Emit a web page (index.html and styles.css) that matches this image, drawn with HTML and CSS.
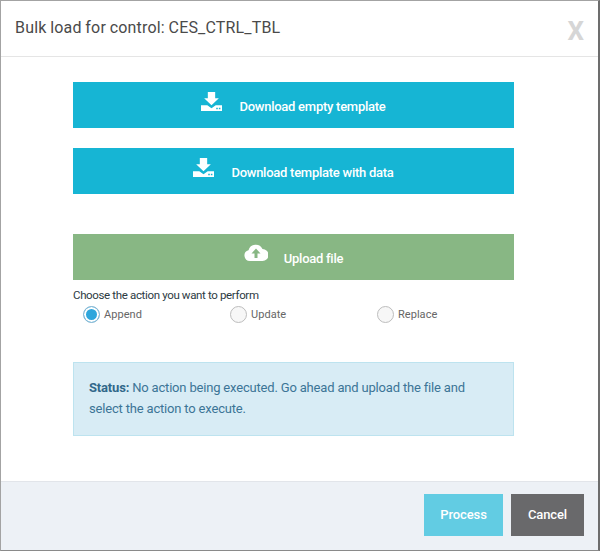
FILE: index.html
```html
<!DOCTYPE html>
<html lang="en">
<head>
<meta charset="utf-8">
<title>Bulk load</title>
<link rel="stylesheet" href="styles.css">
</head>
<body>
<div class="modal">
  <header class="modal-header">
    <h1 class="modal-title">Bulk load for control: CES_CTRL_TBL</h1>
    <span class="modal-close">X</span>
  </header>
  <main class="modal-body">
    <a class="action action-info">
      <svg class="icon" viewBox="0 0 20 18"><path d="M6.500 0h7v6H17l-7 6.500L3 6h3.500zM0 12.500h6L10 15.500l4-3h6V18H0zM14.500 15v1.300h1.500V15zM17 15v1.300h1.500V15z" fill-rule="evenodd"/></svg>
      <span>Download empty template</span>
    </a>
    <a class="action action-info">
      <svg class="icon" viewBox="0 0 20 18"><path d="M6.500 0h7v6H17l-7 6.500L3 6h3.500zM0 12.500h6L10 15.500l4-3h6V18H0zM14.500 15v1.300h1.500V15zM17 15v1.300h1.500V15z" fill-rule="evenodd"/></svg>
      <span>Download template with data</span>
    </a>
    <a class="action action-success">
      <svg class="icon icon-cloud" viewBox="0 0 24 17"><path d="M6 17a5.500 5.500 0 0 1-1.500-10.800A7.500 7.500 0 0 1 18.500 5 6 6 0 0 1 18.500 17zM12 4.500L7.500 9.500h3v4.500h3V9.500h3z" fill-rule="evenodd"/></svg>
      <span>Upload file</span>
    </a>
    <p class="choose">Choose the action you want to perform</p>
    <div class="radios">
      <label class="radio"><span class="dot dot-on"></span>Append</label>
      <label class="radio"><span class="dot"></span>Update</label>
      <label class="radio"><span class="dot"></span>Replace</label>
    </div>
    <div class="alert"><b>Status:</b> No action being executed. Go ahead and upload the file and select the action to execute.</div>
  </main>
  <footer class="modal-footer">
    <button class="btn btn-process">Process</button>
    <button class="btn btn-cancel">Cancel</button>
  </footer>
</div>
</body>
</html>
```
FILE: styles.css
```css
* { box-sizing: border-box; }
html, body { margin: 0; padding: 0; }
body { font-family: Roboto, "Liberation Sans", sans-serif; background: #fff; }
.modal {
  width: 600px; height: 551px;
  display: flex; flex-direction: column;
  border: 1px solid #a3a3a3;
  border-right: 2px solid #6d6d6d;
  border-bottom: 1px solid #8a8a8a;
  background: #fff;
}
.modal-header {
  height: 56px; flex: none;
  display: flex; justify-content: space-between; align-items: flex-start;
  padding: 0 14px 0 14px;
  border-bottom: 1px solid #e5e5e5;
}
.modal-title { margin: 17px 0 0; font-size: 16px; line-height: 20px; font-weight: 400; color: #4a4a4a; letter-spacing: 0.17px; word-spacing: -0.4px; }
.modal-close { margin-top: 15px; font-size: 26px; line-height: 30px; font-weight: 700; color: #d6d6d6; }
.modal-body { flex: 1; padding: 25px 84px 0 72px; }
.action {
  height: 46px; display: flex; align-items: center; justify-content: center;
  gap: 17px; margin-bottom: 20px;
  color: #fff; font-size: 13px; font-weight: 500; letter-spacing: -0.26px;
}
.action-info { background: #16b5d4; }
.action-success { background: #88b784; margin: 40px 0 0; gap: 16px; }
.action span { position: relative; top: 1px; }
.icon { width: 21px; height: 19px; fill: #fff; margin-bottom: 8px; }
.icon-cloud { width: 24px; height: 17px; margin-bottom: 9px; }
.choose { margin: 8px 0 0; font-size: 11.500px; line-height: 14px; color: #2c3a43; letter-spacing: -0.35px; }
.radios { display: flex; padding-left: 10px; height: 21px; align-items: flex-end; }
.radio {
  flex: none; width: 147px; display: flex; align-items: center; gap: 4px;
  font-size: 11px; color: #666; letter-spacing: 0.04px;
}
.dot {
  width: 17px; height: 17px; border-radius: 50%;
  border: 1px solid #bdbdbd; background: #f7f7f7; flex: none;
}
.dot-on {
  border-color: #8db9d3; background: #2ea6dc; box-shadow: inset 0 0 0 2px #fff;
}
.alert {
  margin-top: 39px; height: 74px; padding: 14px 15px;
  background: #d8ecf5; border: 1px solid #bde3ef;
  font-size: 13px; line-height: 21px; color: #3c7597; letter-spacing: -0.18px;
}
.alert b { font-weight: 700; color: #31688a; }
.modal-footer {
  height: 69px; flex: none;
  display: flex; justify-content: flex-end; gap: 8px;
  padding: 12px 14px 0 0;
  background: #edf1f6; border-top: 1px solid #e2e5ea;
}
.btn {
  height: 42px; border: 0; padding: 0 0 2px; color: #fff;
  font-family: inherit; font-size: 13px; font-weight: 500; letter-spacing: -0.1px;
}
.btn-process { width: 79px; background: #62cce3; }
.btn-cancel { width: 73px; background: #69696b; }
```
